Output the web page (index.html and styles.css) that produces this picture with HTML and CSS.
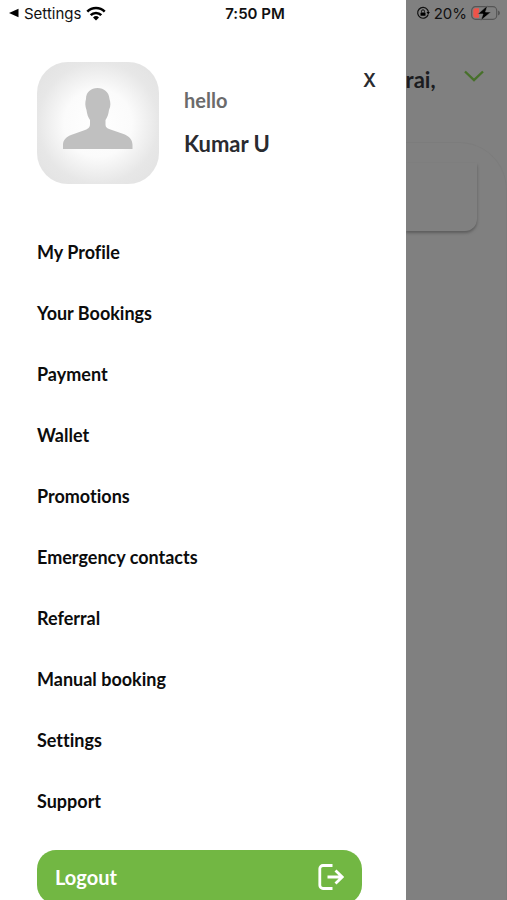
FILE: index.html
```html
<!DOCTYPE html>
<html lang="en">
<head>
<meta charset="utf-8">
<meta name="viewport" content="width=device-width, initial-scale=1">
<title>Menu</title>
<link rel="stylesheet" href="styles.css">
</head>
<body>
<div class="screen">
  <header class="status">
    <a class="status-back" href="#">
      <svg class="back-icon" viewBox="0 0 10 10" aria-hidden="true"><path d="M9.500 .8v8.400L0 5z"/></svg>
      Settings
      <svg class="wifi-icon" viewBox="0 0 20 15" aria-hidden="true">
        <g fill="none" stroke="#000" stroke-width="2.600"><path d="M1.300 5.600a12.300 12.300 0 0 1 17.400 0"/><path d="M4.700 9.200a7.500 7.500 0 0 1 10.600 0"/></g>
        <path d="M10 14.500 7 11.400a4.300 4.300 0 0 1 6 0z"/>
      </svg>
    </a>
    <time class="clock">7:50 PM</time>
    <div class="status-power">
      <svg class="lock-icon" viewBox="0 0 14 14" aria-hidden="true">
        <path d="M11.400 3.600A5.400 5.400 0 1 0 12.200 8.500M11.400 3.600a5.400 5.400 0 0 1 1 3" fill="none" stroke="#111" stroke-width="1.200"/>
        <path d="M10.500 6h3.400l-1.700 2.600z"/>
        <rect x="4.500" y="6.400" width="5" height="3.400" rx=".6"/>
        <path d="M5.500 6.500V5.300a1.500 1.500 0 0 1 3 0v1.200" fill="none" stroke="#111"/>
      </svg>
      <span>20%</span>
      <svg class="battery-icon" viewBox="0 0 30 16" aria-hidden="true">
        <rect x=".7" y="1.700" width="25" height="12.600" rx="3.800" fill="none" stroke="#555" stroke-width="1.200"/>
        <path d="M27 5.500q2 .8 2 2.500t-2 2.500z" fill="#555"/>
        <path d="M4.500 3.300H8v9.400H4.500a2.200 2.200 0 0 1-2.200-2.200v-5a2.200 2.200 0 0 1 2.200-2.200z" fill="#ed5349"/>
        <path d="M16.500.5 6.800 9H12l-2.200 6.500L20 7h-5.500z" stroke="#808080" stroke-width=".6"/>
      </svg>
    </div>
  </header>

  <aside class="drawer">
    <div class="profile">
      <svg class="avatar" viewBox="0 0 122 122" role="img" aria-label="Profile photo">
        <defs><radialGradient id="glow" cx="50%" cy="50%" r="66%"><stop offset="0" stop-color="#fff"/><stop offset=".42" stop-color="#fbfbfb"/><stop offset=".75" stop-color="#e7e7e7"/><stop offset="1" stop-color="#e2e2e2"/></radialGradient></defs>
        <rect width="122" height="122" rx="31" fill="url(#glow)"/>
        <path d="M26 87v-4c0-5 3-8 8-10l14-5c4-1.500 5-3 5-6v-4c-2-3-3-6-3.500-10C48 44 48 40 49 37c0-7 5-11 11.500-11S72 30 72.500 37c1 3 1.500 7-.5 11-.5 4-1.500 7-3.500 10v4c0 3 1 4 5 5.500l13 4.500c5 2 9 5 9 11v4z" fill="#c0c0c0"/>
      </svg>
      <div class="who">
        <p class="greeting">hello</p>
        <h1 class="name">Kumar U</h1>
      </div>
      <button class="close" type="button" aria-label="Close menu">X</button>
    </div>
    <nav class="menu">
      <a href="#">My Profile</a>
      <a href="#">Your Bookings</a>
      <a href="#">Payment</a>
      <a href="#">Wallet</a>
      <a href="#">Promotions</a>
      <a href="#">Emergency contacts</a>
      <a href="#">Referral</a>
      <a href="#">Manual booking</a>
      <a href="#">Settings</a>
      <a href="#">Support</a>
    </nav>
    <button class="logout" type="button">
      <span>Logout</span>
      <svg class="logout-icon" viewBox="0 0 26 26" fill="none" stroke="#fff" stroke-width="2.800" aria-hidden="true"><path d="M14.500 1.500H5a3.200 3.200 0 0 0-3.200 3.200v16.600A3.200 3.200 0 0 0 5 24.500h9.500M9.500 13h14.500M17.500 6.500 24.200 13l-6.700 6.500"/></svg>
    </button>
  </aside>

  <main class="backdrop">
    <div class="place">
      <span>rai,</span>
      <svg class="chevron" viewBox="0 0 20 12" fill="none" stroke="#47702a" stroke-width="2.400" aria-hidden="true"><path d="m1 1.500 9 8.500 9-8.500"/></svg>
    </div>
    <div class="sheet"><div class="card"></div></div>
  </main>
</div>
</body>
</html>
```
FILE: styles.css
```css
* { box-sizing: border-box; }

body {
  margin: 0;
  font-family: Lato, "Open Sans", sans-serif;
  font-variant-ligatures: none;
  color: #0c0c0c;
  background: #fff;
}

h1, p { margin: 0; }
a { color: inherit; text-decoration: none; }

button {
  border: 0;
  padding: 0;
  background: none;
  font: inherit;
  color: inherit;
  cursor: pointer;
}

svg { display: block; flex: none; }

.screen {
  position: relative;
  display: grid;
  grid-template-columns: 4fr 1fr;
  height: 100vh;
  overflow: hidden;
}

/* Status bar lies over both the drawer and the dimmed page */
.status {
  position: absolute;
  inset: 0 0 auto;
  display: grid;
  grid-template-columns: 1fr auto 1fr;
  align-items: center;
  height: 26px;
  padding: 0 6px 0 9px;
  font-family: Inter, sans-serif;
  font-size: 15px;
  color: #111;
}

.status-back { display: flex; align-items: center; gap: 5px; }
.back-icon { width: 10px; height: 10px; }
.wifi-icon { width: 20px; height: 15px; }
.clock { font-weight: 600; }
.status-power { display: flex; align-items: center; justify-content: flex-end; gap: 4px; }
.lock-icon { width: 14px; height: 14px; }
.battery-icon { width: 30px; height: 16px; }

.drawer {
  padding: 62px 44px 0 37px;
  background: #fff;
}

.profile { display: flex; align-items: flex-start; }
.avatar { width: 122px; height: 122px; }

.who { flex: 1; padding: 24px 0 0 25px; }
.greeting { font-size: 20px; line-height: 28px; font-weight: 700; color: #6b6b6b; }
.name { margin-top: 16px; font-size: 22px; line-height: 28px; font-weight: 700; color: #2a2b30; }

.close {
  width: 24px;
  height: 36px;
  margin-right: -20px;
  font-family: Inter, sans-serif;
  font-size: 18px;
  font-weight: 600;
  color: #2a2b30;
}

.menu { padding-top: 37px; }
.menu a {
  display: flex;
  align-items: center;
  height: 61px;
  font-size: 18px;
  font-weight: 700;
}

.logout {
  display: flex;
  align-items: center;
  justify-content: space-between;
  width: 100%;
  height: 54px;
  margin-top: 19px;
  padding: 0 18px;
  border-radius: 19px;
  background: #72b743;
  color: #fff;
  font-size: 20px;
  font-weight: 700;
}
.logout-icon { width: 26px; height: 26px; }

.backdrop { background: #808080; overflow: hidden; }

.place {
  display: flex;
  align-items: center;
  justify-content: space-between;
  margin-top: 66px;
  padding-right: 23px;
  font-size: 22px;
  line-height: 28px;
  font-weight: 700;
  color: #1b1c20;
}
.chevron { width: 20px; height: 12px; margin-bottom: 8px; }

.sheet {
  height: 100%;
  margin-top: 48px;
  padding: 20px 29px 0 0;
  border-top: 1px solid #7c7c7c;
  border-right: 1px solid #7c7c7c;
  border-top-right-radius: 48px;
}
.card {
  height: 68px;
  border-radius: 0 0 12px 0;
  background: #808080;
  box-shadow: 0 2px 3px #5c5c5c;
}
```
